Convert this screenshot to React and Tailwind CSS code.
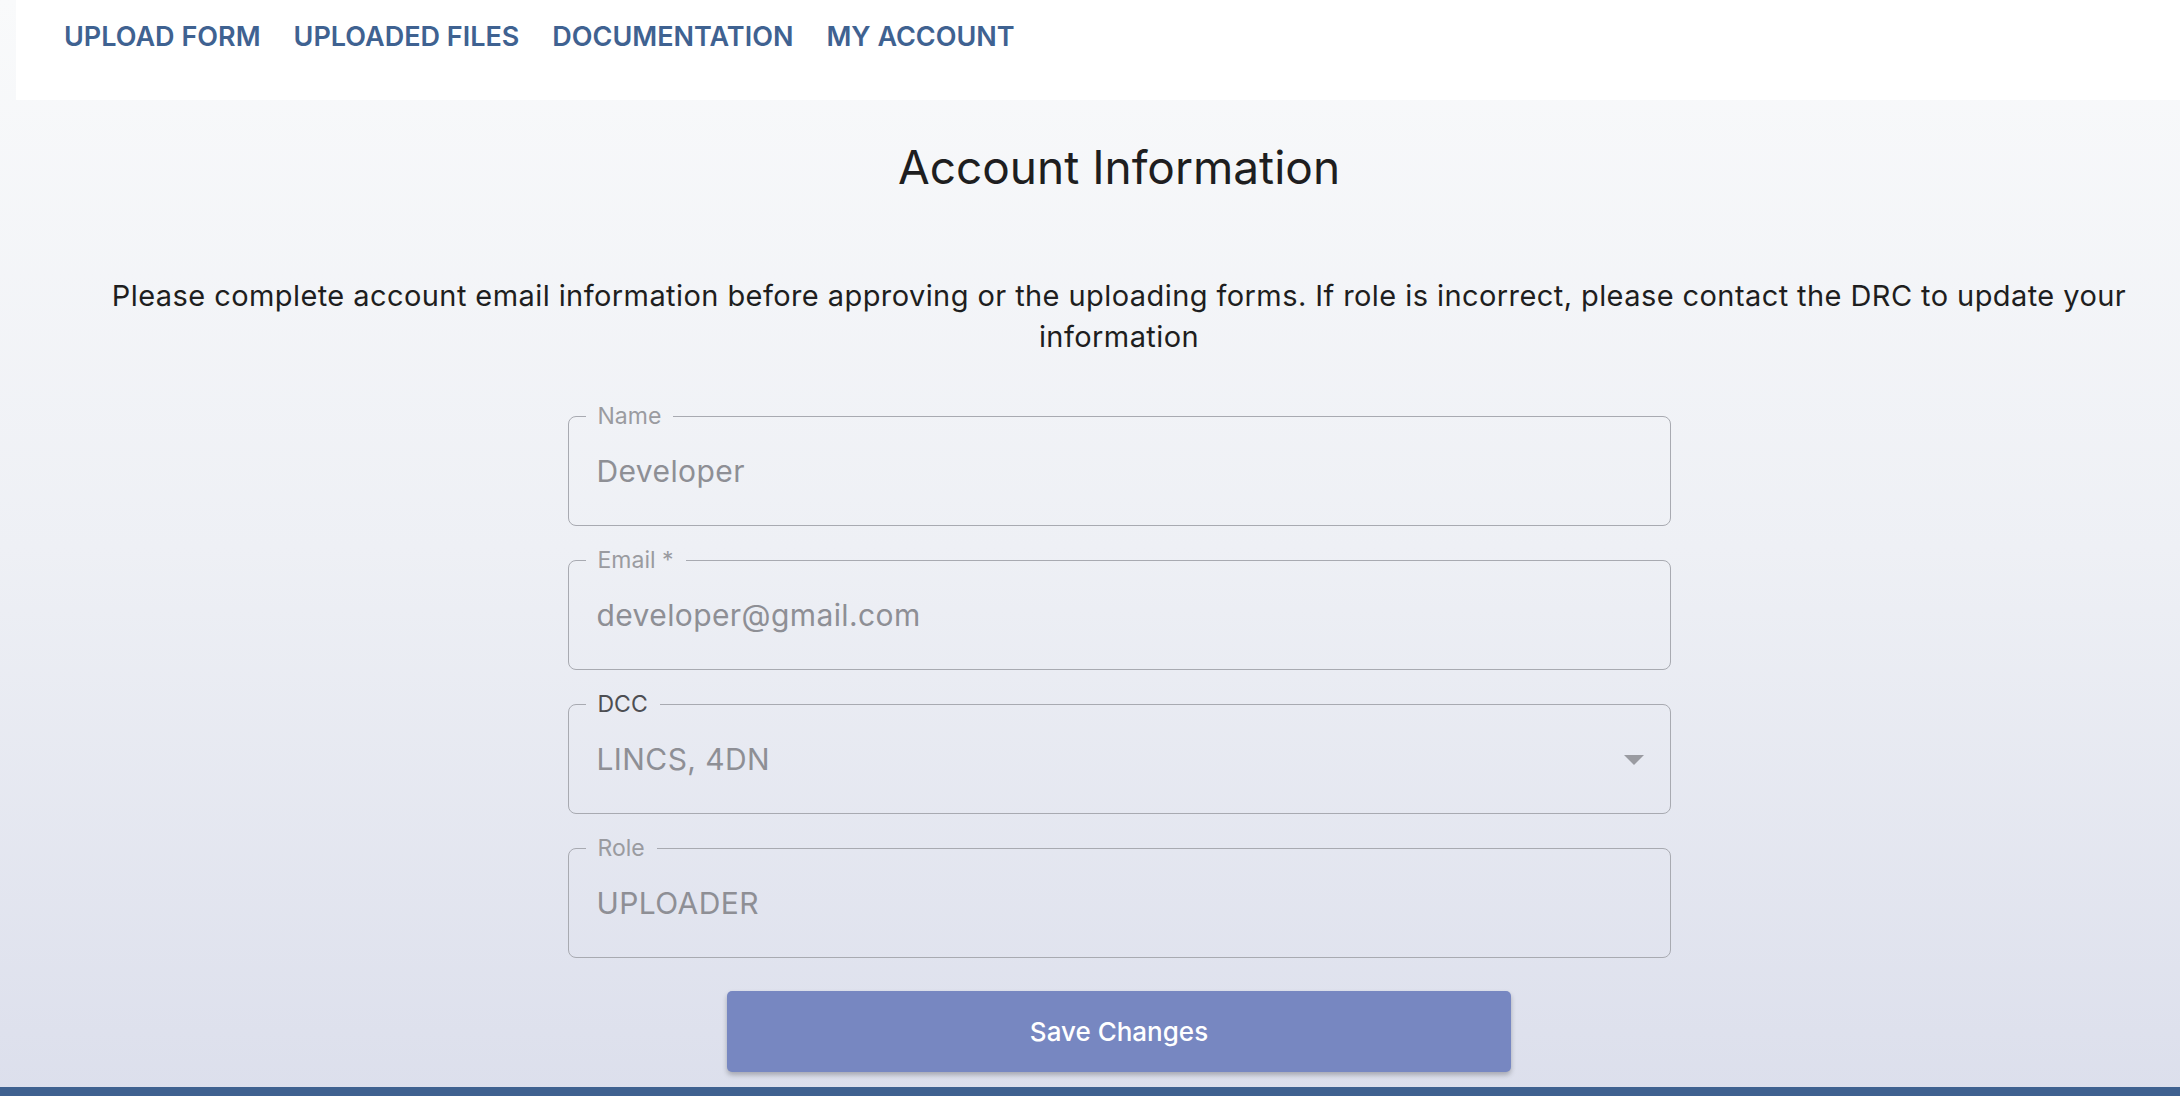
import React from "react";

const font = { fontFamily: "Inter, 'Noto Sans', sans-serif" };

function Field({ label, value, labelDark, select }) {
  return (
    <div className="relative h-[110px] w-[1103px] flex items-center pl-[29px]">
      <span className="text-[30px] leading-[36px] text-[#8e8f95] tracking-[0.4px]">{value}</span>
      {select && (
        <svg className="absolute right-[27px] top-[51px]" width="20" height="10" viewBox="0 0 20 10">
          <path d="M0 0 L20 0 L10 10 Z" fill="#9a9ba1" />
        </svg>
      )}
      <fieldset className="pointer-events-none absolute left-0 right-0 top-[-11px] bottom-0 m-0 rounded-[8px] border-[1.5px] border-[#a8aab1] px-[17px] py-0">
        <legend className={"px-[12px] text-[23px] leading-[22px] " + (labelDark ? "text-[#4d4e52]" : "text-[#9a9ba0]")}>
          {label}
        </legend>
      </fieldset>
    </div>
  );
}

export default function App() {
  return (
    <div
      style={font}
      className="relative flex h-[1096px] w-full flex-col overflow-hidden bg-gradient-to-b from-[#f9fafb] via-[#eef0f5] to-[#dcdfec]"
    >
      <header className="ml-[16px] h-[100px] shrink-0 bg-white">
        <nav className="flex gap-[33px] pl-[48px] pt-[20px] text-[27px] font-semibold leading-[34px] text-[#3f6291]">
          <span>UPLOAD FORM</span>
          <span>UPLOADED FILES</span>
          <span>DOCUMENTATION</span>
          <span>MY ACCOUNT</span>
        </nav>
      </header>

      <main className="flex flex-col items-center pl-[58px]">
        <h1 className="mt-[40px] text-[46px] font-normal leading-[54px] text-[#1e1e20]">Account Information</h1>
        <p className="mt-[81px] w-[2060px] text-center text-[29px] leading-[41px] tracking-[0.42px] text-[#1e1e20]">
          Please complete account email information before approving or the uploading forms. If role is incorrect, please contact the DRC to update your information
        </p>

        <div className="mt-[59px] flex flex-col gap-[34px]">
          <Field label="Name" value="Developer" />
          <Field label="Email *" value="developer@gmail.com" />
          <Field label="DCC" value="LINCS, 4DN" labelDark select />
          <Field label="Role" value="UPLOADER" />
        </div>

        <button className="mt-[33px] flex h-[81px] w-[784px] items-center justify-center rounded-[5px] bg-[#7787c1] text-[26px] font-medium text-white shadow-[0_3px_5px_rgba(0,0,0,0.25)]">
          Save Changes
        </button>
      </main>

      <div className="absolute bottom-0 left-0 right-0 h-[9px] bg-[#3f6190]" />
    </div>
  );
}
